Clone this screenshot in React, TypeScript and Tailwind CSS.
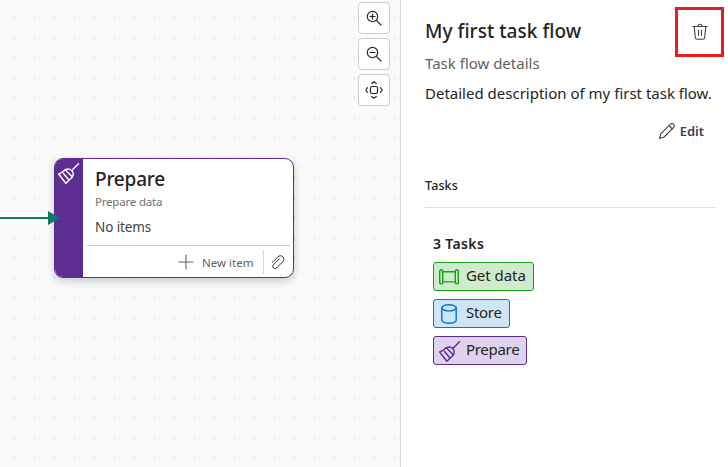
import React from "react";

const stroke = {
  fill: "none",
  stroke: "currentColor",
  strokeLinecap: "round" as const,
  strokeLinejoin: "round" as const,
};

function ZoomIcon({ plus }: { plus?: boolean }) {
  return (
    <svg width="20" height="20" viewBox="0 0 20 20" {...stroke} strokeWidth="1.15">
      <circle cx="8.5" cy="8.5" r="5.2" />
      <path d="M12.4 12.4 17 17M6 8.500h5" />
      {plus && <path d="M8.5 6v5" />}
    </svg>
  );
}

function FitIcon() {
  return (
    <svg width="20" height="20" viewBox="0 0 20 20" {...stroke} strokeWidth="1.2">
      <rect x="6.500" y="6.500" width="7" height="7" rx="1.500" />
      <path d="M7.700 3.500 10 1.800l2.300 1.700M7.700 16.500l2.300 1.700 2.300-1.700M3.500 7.700 1.800 10l1.700 2.300M16.500 7.700l1.700 2.300-1.700 2.300" />
    </svg>
  );
}

function Broom() {
  return (
    <svg width="24" height="24" viewBox="0 0 24 24" {...stroke} strokeWidth="1.4">
      <path d="M21.500 2.800 15 9.200" />
      <path d="M8.200 8.800c2.200-1.200 4.800-1 6.500.7 1.600 1.700 1.900 4.200.7 6.400L8.900 22.300 1.600 13c2.600-1 4.700-2.400 6.600-4.200Z" />
      <path d="m8.200 8.800 7.200 7.100M6.300 12.300l5.200 6.200" />
    </svg>
  );
}

function PipeIcon() {
  return (
    <svg width="20" height="16" viewBox="0 0 20 16" {...stroke} strokeWidth="1.4">
      <rect x=".7" y=".7" width="3" height="14.200" rx="1.500" />
      <rect x="16.300" y=".7" width="3" height="14.200" rx="1.500" />
      <path d="M3.700 2.700h12.600M3.700 12.900h12.600" />
    </svg>
  );
}

function StoreIcon() {
  return (
    <svg width="16" height="20" viewBox="0 0 16 20" {...stroke} strokeWidth="1.4">
      <ellipse cx="8" cy="3.800" rx="7.200" ry="3.100" />
      <path d="M.8 3.800v12.400c0 1.700 3.200 3.100 7.200 3.100s7.200-1.400 7.200-3.100V3.800" />
    </svg>
  );
}

function TrashIcon() {
  return (
    <svg width="20" height="20" viewBox="0 0 20 20" {...stroke} strokeWidth="1.1">
      <path d="M2.800 4.500h14.400M8 4.300a2 2 0 0 1 4 0M4.200 4.700l1.100 10.800a2 2 0 0 0 2 1.800h5.400a2 2 0 0 0 2-1.800l1.100-10.800M8.500 8v5.500M11.500 8v5.500" />
    </svg>
  );
}

function PencilIcon() {
  return (
    <svg width="20" height="20" viewBox="0 0 20 20" {...stroke} strokeWidth="1.1">
      <path d="M13.400 3.200a2.100 2.100 0 0 1 3.200 0c1 .9 1 2.300.1 3.200l-9.600 9.600-4.600 1.500 1.300-4.700ZM12 4.700 15.300 8" />
    </svg>
  );
}

function ClipIcon() {
  return (
    <svg width="16" height="16" viewBox="0 0 16 16" {...stroke} strokeWidth="1">
      <path d="m2 7.500 5.700-5.600a3.300 3.300 0 0 1 4.900-.1 3.400 3.400 0 0 1 0 4.900l-6.200 6.200a2.200 2.200 0 0 1-3.200-3.200l5.900-5.900" transform="translate(.2 1)" />
    </svg>
  );
}

const controls = [
  { label: "Zoom in", icon: <ZoomIcon plus /> },
  { label: "Zoom out", icon: <ZoomIcon /> },
  { label: "Fit to view", icon: <FitIcon /> },
];

function TaskCard() {
  return (
    <div className="absolute left-[54px] top-[158px] flex h-[120px] w-[240px] overflow-hidden rounded-[9px] border border-[#5c2e91] bg-white shadow-[0_3px_9px_rgba(0,0,0,0.2)]">
      <div className="w-7 shrink-0 bg-[#5c2e91] pl-[2px] pt-[2px] text-white">
        <Broom />
      </div>
      <div className="flex min-w-0 flex-1 flex-col pl-1 pr-[3px]">
        <div className="flex h-[86px] flex-col whitespace-nowrap pl-2">
          <div className="mt-[7px] h-[26px] text-[19px] font-medium leading-[26px] tracking-[-0.2px] text-[#242424]">Prepare</div>
          <div className="mt-[2px] h-4 text-[11.500px] leading-4 tracking-[-0.2px] text-[#707070]">Prepare data</div>
          <div className="mt-[7px] h-5 text-[13.500px] leading-5 tracking-[-0.1px] text-[#424242]">No items</div>
        </div>
        <div className="flex h-8 items-center border-t border-[#c7c7c7] text-[#616161]">
          <svg className="ml-[91px]" width="16" height="16" viewBox="0 0 16 16" {...stroke} strokeWidth="1.100">
            <path d="M8 1v14M1 8h14" />
          </svg>
          <span className="ml-2 w-[61px] whitespace-nowrap pt-[2px] text-[11.500px] leading-4">New item</span>
          <div className="h-6 w-px bg-[#d6d6d6]" />
          <span className="ml-[6px] text-[#333]"><ClipIcon /></span>
        </div>
      </div>
    </div>
  );
}

export default function App() {
  return (
    <div className="flex h-[467px] w-[728px] overflow-hidden bg-white font-['Noto_Sans','Open_Sans',sans-serif] text-[#242424]">
      <main className="relative w-[401px] shrink-0 border-r border-[#d9d9d9] bg-[#fafafa]">
        <svg className="absolute inset-0" width="400" height="467" shapeRendering="crispEdges">
          <defs>
            <pattern id="grid" x="4" y="7" width="20" height="20" patternUnits="userSpaceOnUse">
              <rect x="10" y="10" width="1" height="2" fill="#b5e9d8" />
            </pattern>
          </defs>
          <rect width="400" height="467" fill="url(#grid)" />
        </svg>
        <div className="absolute left-[358px] top-[2px] flex flex-col gap-1">
          {controls.map((c) => (
            <button key={c.label} aria-label={c.label} className="flex h-8 w-8 items-center justify-center rounded-[4px] border border-[#cdcdcd] bg-white">
              {c.icon}
            </button>
          ))}
        </div>
        <TaskCard />
        <svg className="absolute left-0 top-[210px]" width="60" height="16" fill="#117865">
          <path d="M0 7h48V1l12 7-12 7V9H0Z" />
        </svg>
      </main>

      <aside className="flex min-w-0 flex-1 flex-col whitespace-nowrap pl-6 pr-[4px]">
        <header className="flex h-[57px] justify-between pt-[7px]">
          <h1 className="mt-[11px] text-[19px] font-medium leading-[26px] tracking-[0.05px]">My first task flow</h1>
          <button aria-label="Delete task flow" className="flex h-[50px] w-[49px] items-center justify-center border-[3px] border-[#e81b23] text-[#424242]">
            <TrashIcon />
          </button>
        </header>
        <p className="-mt-[5px] h-[22px] text-[15px] leading-[22px] text-[#616161]">Task flow details</p>
        <p className="mt-2 h-[22px] text-[15px] leading-[22px]">Detailed description of my first task flow.</p>
        <div className="mt-[17px] flex h-5 items-center justify-end gap-[3px] pr-5 text-[#424242]">
          <PencilIcon />
          <span className="text-[13px] font-semibold leading-5">Edit</span>
        </div>
        <h2 className="mr-2 mt-[34px] h-[33px] border-b border-[#e0e0e0] text-[12.500px] font-medium leading-[22px] tracking-[0.1px]">Tasks</h2>
        <section className="flex flex-col items-start pl-2 pt-[26px]">
          <h3 className="h-5 text-[14px] font-semibold leading-5 tracking-[0.35px]">3 Tasks</h3>
          <div className="mt-2 flex flex-col items-start gap-2 text-[15px] leading-[22px]">
            <div className="flex h-[29px] w-[101px] items-center rounded-[3px] border border-[#13a10e] bg-[#ceeccd] pl-[5px]">
              <span className="w-[27px] text-[#13a10e]"><PipeIcon /></span>
              <span className="-mt-1 tracking-[-0.05px]">Get data</span>
            </div>
            <div className="flex h-[29px] w-[77px] items-center rounded-[3px] border border-[#0078d4] bg-[#cde5f7] pl-[7px]">
              <span className="w-[25px] text-[#0078d4]"><StoreIcon /></span>
              <span className="-mt-1 tracking-[-0.3px]">Store</span>
            </div>
            <div className="flex h-[29px] w-[94px] items-center rounded-[3px] border border-[#5c2e91] bg-[#dfd2ec] pl-1">
              <span className="w-7 text-[#5c2e91]"><Broom /></span>
              <span className="-mt-1 tracking-[-0.3px]">Prepare</span>
            </div>
          </div>
        </section>
      </aside>
    </div>
  );
}
